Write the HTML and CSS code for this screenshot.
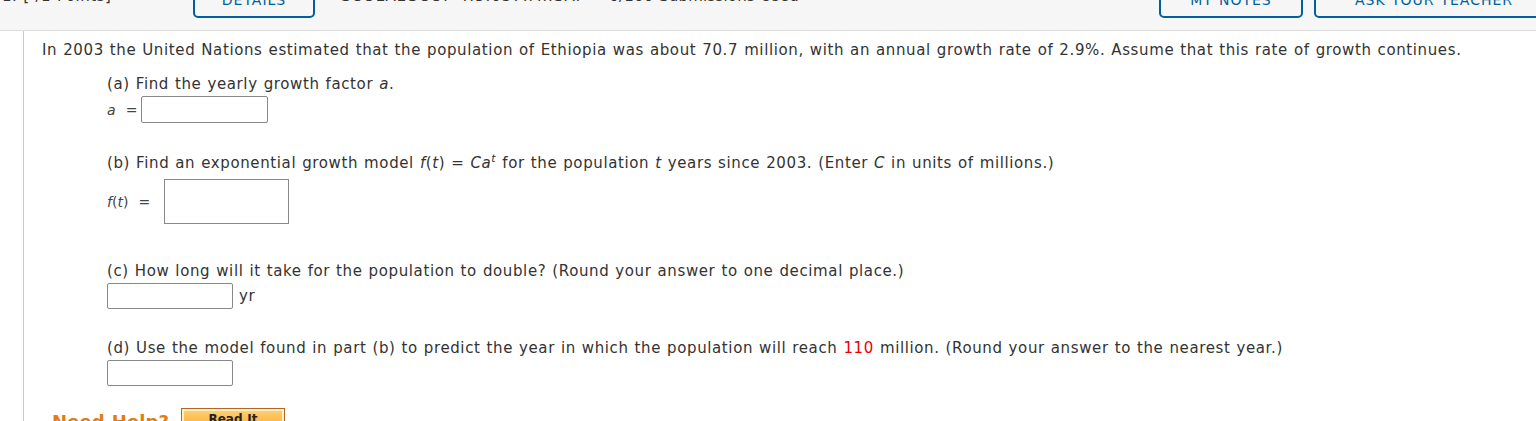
FILE: index.html
```html
<!DOCTYPE html>
<html>
<head>
<meta charset="utf-8">
<link rel="stylesheet" href="styles.css">
</head>
<body>
<div class="header">
  <div class="header-row">
    <span class="qnum">1. [-/1 Points]</span>
    <span class="btn btn-details">DETAILS</span>
    <span class="qinfo">SCOLALGCC7 4.5.037.MI.SA.</span>
    <span class="qsub">0/100 Submissions Used</span>
    <span class="spacer"></span>
    <span class="btn btn-notes">MY NOTES</span>
    <span class="btn btn-ask">ASK YOUR TEACHER</span>
  </div>
</div>
<div class="content">
  <p class="intro">In 2003 the United Nations estimated that the population of Ethiopia was about 70.7 million, with an annual growth rate of 2.9%. Assume that this rate of growth continues.</p>
  <div class="part part-a">
    <div class="q">(a) Find the yearly growth factor <i>a</i>.</div>
    <div class="ans"><span class="lbl"><i>a</i> &nbsp;=</span><span class="box box-a"></span></div>
  </div>
  <div class="part part-b">
    <div class="q">(b) Find an exponential growth model <i>f</i>(<i>t</i>) = <i>Ca</i><sup><i>t</i></sup> for the population <i>t</i> years since 2003. (Enter <i>C</i> in units of millions.)</div>
    <div class="ans ans-b"><span class="lbl"><i>f</i>(<i>t</i>) &nbsp;=</span><span class="box box-b"></span></div>
  </div>
  <div class="part part-c">
    <div class="q">(c) How long will it take for the population to double? (Round your answer to one decimal place.)</div>
    <div class="ans"><span class="box box-c"></span><span class="unit">yr</span></div>
  </div>
  <div class="part part-d">
    <div class="q">(d) Use the model found in part (b) to predict the year in which the population will reach <span class="red">110</span> million. (Round your answer to the nearest year.)</div>
    <div class="ans"><span class="box box-c"></span></div>
  </div>
  <div class="help">
    <span class="help-txt">Need Help?</span>
    <span class="readit">Read It</span>
  </div>
</div>
</body>
</html>
```
FILE: styles.css
```css
html, body {
  margin: 0;
  padding: 0;
  background: #fff;
  font-family: "DejaVu Sans", Verdana, sans-serif;
  font-size: 15px;
  letter-spacing: 0.62px;
  word-spacing: 0.6px;
  color: #333;
  overflow: hidden;
}
.header {
  display: flow-root;
  height: 30px;
  background: #f6f6f6;
  border-bottom: 1px solid #dcdcdc;
}
.header-row {
  display: flex;
  align-items: center;
  height: 36px;
  margin-top: -18px;
  padding-left: 2px;
}
.qnum { width: 191px; color: #333; margin-top: -8px; letter-spacing: 0.5px; }
.qinfo { margin-left: 26px; color: #333; margin-top: -8px; letter-spacing: 1px; }
.qsub { margin-left: 28px; color: #333; margin-top: -8px; letter-spacing: 0.2px; }
.spacer { flex: 1; }
.btn {
  box-sizing: border-box;
  height: 36px;
  border: 2px solid #00609c;
  border-radius: 5px;
  color: #00609c;
  display: flex;
  align-items: center;
  justify-content: center;
  font-size: 14px;
  letter-spacing: 1px;
}
.btn-details { width: 122px; }
.btn-notes { width: 144px; }
.btn-ask { width: 240px; margin-left: 11px; margin-right: -18px; }
.content {
  margin-left: 23px;
  border-left: 1px solid #ccc;
  padding-left: 18px;
  padding-top: 9px;
  height: 400px;
}
.intro { margin: 0; line-height: 20px; }
.part { margin-left: 65px; }
.q { line-height: 20px; }
.part-a { margin-top: 14px; }
.part-b { margin-top: 30px; }
.part-c { margin-top: 37px; }
.part-d { margin-top: 29px; }
.ans { display: flex; align-items: center; margin-top: 2px; }
.lbl { font-size: 14px; margin-right: 4px; color: #444; letter-spacing: 0; }
.ans-b { margin-top: 6px; }
.ans-b .lbl { margin-right: 14px; }
.box {
  display: inline-block;
  box-sizing: border-box;
  border: 1px solid #888;
  border-radius: 2px;
  background: #fff;
}
.box-a { width: 127px; height: 27px; }
.box-b { width: 125px; height: 45px; border-radius: 0; }
.box-c { width: 126px; height: 26px; }
.unit { margin-left: 6px; }
sup { font-size: 11px; vertical-align: 6px; line-height: 0; }
.red { color: #e00; }
.help {
  display: flex;
  align-items: flex-start;
  margin-top: 22px;
  margin-left: 10px;
}
.help-txt { color: #e87b0c; font-weight: bold; font-size: 18px; margin-right: 12px; margin-top: 3px; letter-spacing: 0.1px; }
.readit {
  box-sizing: border-box;
  width: 104px;
  height: 24px;
  border: 1px solid #b5651d;
  background: linear-gradient(#ffd27a, #f6a623);
  box-shadow: inset 0 0 0 2px #fff0c8;
  font-size: 12px;
  font-weight: bold;
  color: #222;
  text-align: center;
  line-height: 20px;
  letter-spacing: 0;
}
i { font-style: italic; }
```
